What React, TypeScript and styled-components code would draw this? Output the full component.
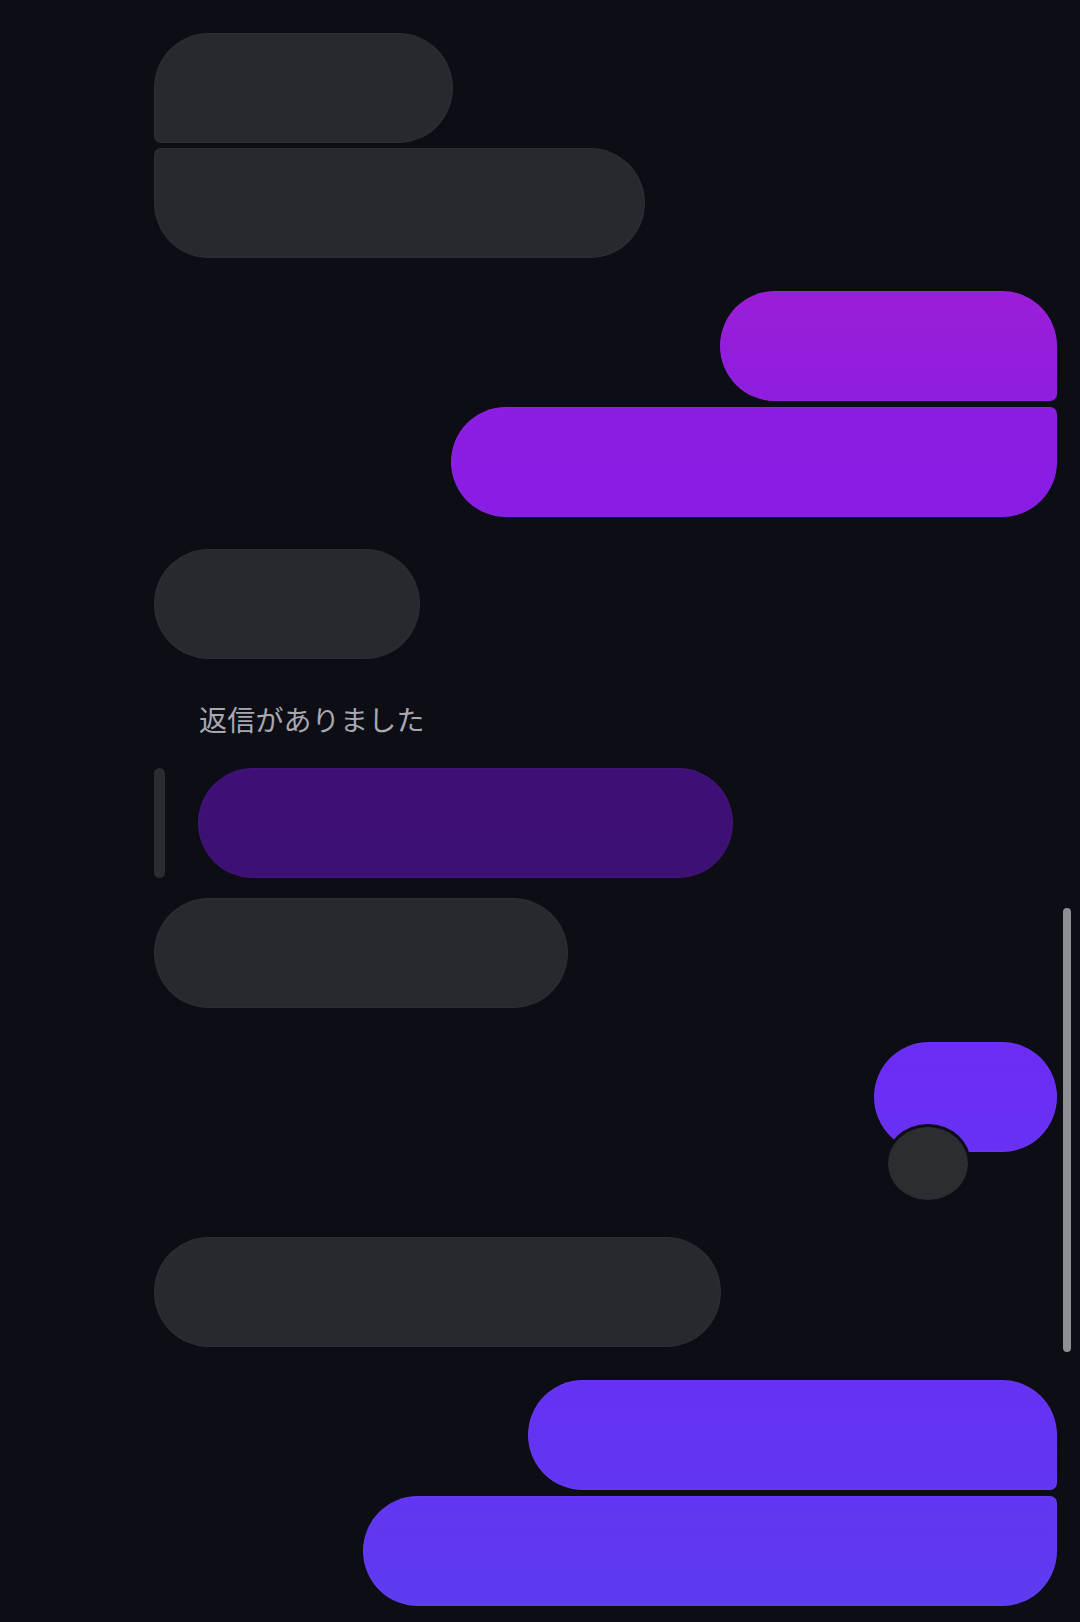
import React from "react";
import styled, { createGlobalStyle } from "styled-components";

const BG = "#0c0d15";

const GlobalStyle = createGlobalStyle`
  html, body {
    margin: 0;
    padding: 0;
    background: ${BG};
    overflow: hidden;
  }
  #root { width: 1080px; }
`;

const Page = styled.div`
  position: relative;
  box-sizing: border-box;
  width: 1080px;
  height: 1622px;
  padding: 33px 23px 0 154px;
  display: flex;
  flex-direction: column;
  background: ${BG};
  font-family: "Noto Sans CJK JP", "Noto Sans", sans-serif;
`;

const Row = styled.div<{ $end?: boolean; $mt?: number }>`
  display: flex;
  justify-content: ${(p) => (p.$end ? "flex-end" : "flex-start")};
  margin-top: ${(p) => p.$mt ?? 0}px;
`;

type Corners = { tl?: number; tr?: number; br?: number; bl?: number };

const Bubble = styled.div<{
  $w: number;
  $from: string;
  $to: string;
  $r?: Corners;
}>`
  position: relative;
  width: ${(p) => p.$w}px;
  height: 110px;
  flex: none;
  box-sizing: border-box;
  background: linear-gradient(180deg, ${(p) => p.$from} 0%, ${(p) => p.$to} 100%);
  border-radius: ${(p) =>
    `${p.$r?.tl ?? 55}px ${p.$r?.tr ?? 55}px ${p.$r?.br ?? 55}px ${p.$r?.bl ?? 55}px`};
  box-shadow: inset 0 0 0 1px rgba(255, 255, 255, 0.025),
    inset 0 0 14px rgba(255, 255, 255, 0.02);
`;

const Caption = styled.div`
  margin-top: 46px;
  margin-left: 45px;
  font-size: 28px;
  line-height: 28px;
  height: 28px;
  color: #a8a8b0;
  letter-spacing: 0.2px;
  white-space: nowrap;
`;

const ReplyRow = styled.div`
  display: flex;
  align-items: stretch;
  gap: 33px;
  margin-top: 35px;
`;

const ReplyBar = styled.div`
  width: 11px;
  height: 110px;
  border-radius: 6px;
  background: #2a2c32;
`;

const Reaction = styled.div`
  position: absolute;
  left: 11px;
  top: 82px;
  width: 86px;
  height: 79px;
  box-sizing: border-box;
  border-radius: 50%;
  border: 3px solid ${BG};
  background: #2b2d30;
`;

const ScrollThumb = styled.div`
  position: absolute;
  left: 1063px;
  top: 908px;
  width: 8px;
  height: 444px;
  border-radius: 4px;
  background: #8e8e95;
`;

const GRAY = "#26292d";
const S = 7;

export default function App() {
  return (
    <>
      <GlobalStyle />
      <Page>
        <Row>
          <Bubble $w={299} $from={GRAY} $to={GRAY} $r={{ bl: S }} />
        </Row>
        <Row $mt={5}>
          <Bubble $w={491} $from={GRAY} $to={GRAY} $r={{ tl: S }} />
        </Row>

        <Row $end $mt={33}>
          <Bubble $w={337} $from="#9b1ed7" $to="#8e1ddf" $r={{ br: S }} />
        </Row>
        <Row $end $mt={6}>
          <Bubble $w={606} $from="#8c1de2" $to="#891de4" $r={{ tr: S }} />
        </Row>

        <Row $mt={32}>
          <Bubble $w={266} $from={GRAY} $to={GRAY} />
        </Row>

        <Caption>返信がありました</Caption>
        <ReplyRow>
          <ReplyBar />
          <Bubble $w={535} $from="#3e1076" $to="#3d1074" />
        </ReplyRow>

        <Row $mt={20}>
          <Bubble $w={414} $from={GRAY} $to={GRAY} />
        </Row>

        <Row $end $mt={34}>
          <Bubble $w={183} $from="#6c2cf6" $to="#6830f4">
            <Reaction />
          </Bubble>
        </Row>

        <Row $mt={85}>
          <Bubble $w={567} $from={GRAY} $to={GRAY} />
        </Row>

        <Row $end $mt={33}>
          <Bubble $w={529} $from="#6631f4" $to="#6136f1" $r={{ br: S }} />
        </Row>
        <Row $end $mt={6}>
          <Bubble $w={694} $from="#6236f2" $to="#5d3bef" $r={{ tr: S }} />
        </Row>

        <ScrollThumb />
      </Page>
    </>
  );
}
